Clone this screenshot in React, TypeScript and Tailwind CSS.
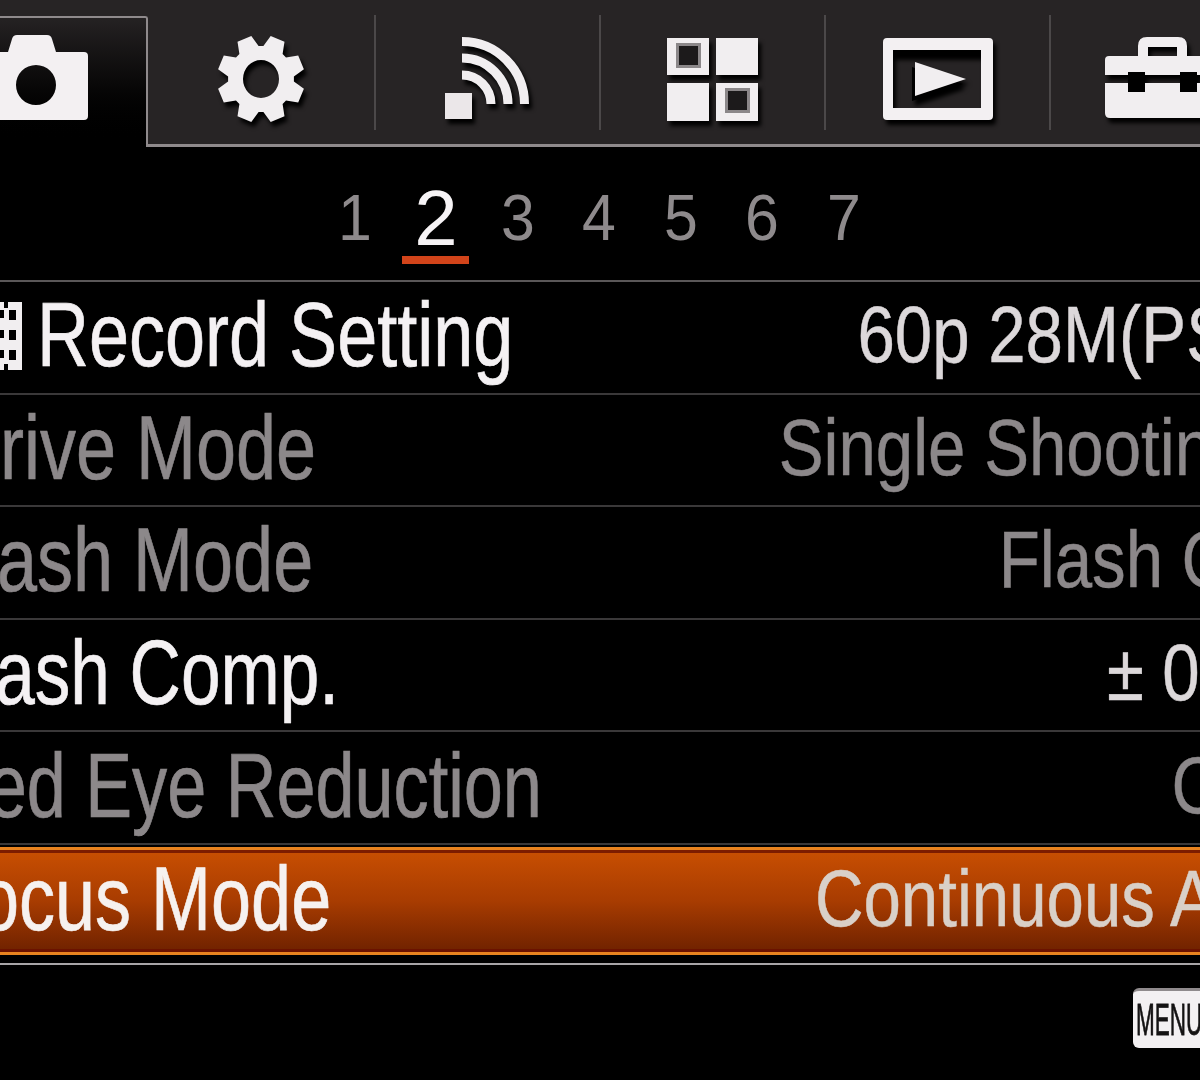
import React from 'react'

const shadow = 'drop-shadow-[3px_5px_2px_#000]'

function buildGear() {
  const parts: string[] = []
  for (let i = 0; i < 8; i++) {
    const a = ((i * 45 + 22.5) * Math.PI) / 180
    const pt = (r: number, off: number) =>
      `${(44 + r * Math.sin(a + off)).toFixed(1)} ${(44 - r * Math.cos(a + off)).toFixed(1)}`
    parts.push(`${i === 0 ? 'M' : 'L'}${pt(33, -0.32)}`, `L${pt(44, -0.17)}`, `L${pt(44, 0.17)}`, `L${pt(33, 0.32)}`)
  }
  return parts.join(' ') + ' Z M44 25 A18 19 0 1 0 44 63 A18 19 0 1 0 44 25 Z'
}

function CameraIcon() {
  return (
    <svg width="88" height="86" viewBox="0 0 88 86">
      <path
        fillRule="evenodd"
        fill="#f3f0f2"
        d="M0 17 L8 17 L12 4 Q13 0 17 0 L47 0 Q51 0 52 4 L56 17 L84 17 Q88 17 88 21 L88 81 Q88 85 84 85 L0 85 Z M36 30 A20 20 0 1 0 36 70 A20 20 0 1 0 36 30 Z"
      />
    </svg>
  )
}

function GearIcon() {
  return (
    <svg width="88" height="88" viewBox="0 0 88 88" className={shadow}>
      <path fillRule="evenodd" fill="#f1eef0" d={buildGear()} />
    </svg>
  )
}

function WifiIcon() {
  return (
    <svg width="86" height="84" viewBox="0 0 86 84" className={shadow}>
      <rect x="0" y="56" width="27" height="26" fill="#ebe7e9" />
      <g fill="none" stroke="#f1eef0" strokeWidth="9">
        <path d="M17 4.5 A62.5 62.5 0 0 1 79.5 67" />
        <path d="M17 21 A46 46 0 0 1 63 67" />
        <path d="M17 38 A29 29 0 0 1 46 67" />
      </g>
    </svg>
  )
}

function GridIcon() {
  return (
    <svg width="91" height="83" viewBox="0 0 91 83" className={shadow}>
      <g fill="#f1eef0">
        <path fillRule="evenodd" d="M0 0 H42 V37 H0 Z M9 5 V30 H34 V5 Z" />
        <rect x="49" y="0" width="42" height="37" />
        <rect x="0" y="45" width="42" height="38" />
        <path fillRule="evenodd" d="M49 45 H91 V83 H49 Z M58 50 V75 H83 V50 Z" />
      </g>
      <path fillRule="evenodd" fill="#8b8789" d="M9 5 H34 V30 H9 Z M12 8 V27 H31 V8 Z" />
      <path fillRule="evenodd" fill="#8b8789" d="M58 50 H83 V75 H58 Z M61 53 V72 H80 V53 Z" />
      <rect x="12" y="8" width="19" height="19" fill="#1c1a1b" />
      <rect x="61" y="53" width="19" height="19" fill="#1c1a1b" />
    </svg>
  )
}

function PlayIcon() {
  return (
    <svg width="110" height="82" viewBox="0 0 110 82" className={shadow}>
      <path
        fillRule="evenodd"
        fill="#f3f0f2"
        d="M4 0 H106 Q110 0 110 4 V78 Q110 82 106 82 H4 Q0 82 0 78 V4 Q0 0 4 0 Z M10 12 V70 H98 V12 Z"
      />
      <rect x="10" y="12" width="88" height="5" fill="#000" />
      <path d="M32 24 L83 41 L32 58 Z" fill="#000" transform="translate(-3 5)" />
      <path d="M32 24 L83 41 L32 58 Z" fill="#f1eef0" />
    </svg>
  )
}

function ToolboxIcon() {
  return (
    <svg width="114" height="84" viewBox="0 0 114 84" className={`${shadow} ml-[12px] shrink-0`}>
      <path
        fillRule="evenodd"
        fill="#f1eef0"
        d="M33 22 V10 Q33 1 42 1 L73 1 Q82 1 82 10 V22 Z M43 11 V20 H72 V11 Z"
      />
      <path fill="#f1eef0" d="M4 20 H114 V39 H0 V24 Q0 20 4 20 Z" />
      <path fill="#f1eef0" d="M0 47 H114 V82 H5 Q0 82 0 77 Z" />
      <path fill="#000" d="M23 36 H40 V56 H23 Z M75 36 H92 V56 H75 Z" />
    </svg>
  )
}

function FilmIcon() {
  return (
    <svg width="22" height="70" viewBox="0 0 22 70" className="mr-[15px] shrink-0">
      <path
        fillRule="evenodd"
        fill="#f1eef0"
        d="M0 2 H4 V8 H8 V2 H22 V70 H8 V64 H4 V70 H0 V58 H4 V50 H0 V38 H4 V30 H0 V18 H4 V10 H0 Z M9 10 V20 H16 V10 Z M9 30 V40 H16 V30 Z M9 50 V60 H16 V50 Z"
      />
    </svg>
  )
}

const pages = ['1', '2', '3', '4', '5', '6', '7']

const rows = [
  { label: 'Record Setting', value: '60p 28M(PS)', on: true, labelPos: 'ml-0', labelScale: 'scale-x-[0.8]', valuePos: 'mr-[-53px]', film: true },
  { label: 'Drive Mode', value: 'Single Shooting', on: false, labelPos: 'ml-[-52px]', labelScale: 'scale-x-[0.8]', valuePos: 'mr-[-49px]', film: false },
  { label: 'Flash Mode', value: 'Flash Off', on: false, labelPos: 'ml-[-63px]', labelScale: 'scale-x-[0.8]', valuePos: 'mr-[-70px]', film: false },
  { label: 'Flash Comp.', value: '±0.0', on: true, labelPos: 'ml-[-64px]', labelScale: 'scale-x-[0.79]', valuePos: 'mr-[-111px] tracking-[22px]', film: false },
  { label: 'Red Eye Reduction', value: 'Off', on: false, labelPos: 'ml-[-63px]', labelScale: 'scale-x-[0.78]', valuePos: 'mr-[-60px]', film: false },
]

export default function App() {
  return (
    <div className="flex h-[1080px] w-[1200px] flex-col overflow-hidden bg-black font-['Liberation_Sans',Arial,sans-serif]">
      {/* Tabs */}
      <div className="flex h-[147px] shrink-0 bg-[#272425]">
        <div className="flex h-[131px] w-[148px] shrink-0 self-end rounded-tr-[3px] border-t-2 border-r-2 border-[#8f8a8c] bg-gradient-to-b from-[#252223] via-[#0a0909] to-black">
          <div className="flex h-full w-[88px] items-start pt-[17px]">
            <CameraIcon />
          </div>
        </div>
        <div className="flex min-w-0 flex-1 border-b-[3px] border-[#8f8a8c]">
          <div className="flex w-[226px] shrink-0 items-center justify-center pt-[14px]">
            <GearIcon />
          </div>
          <div className="mt-[15px] h-[115px] w-[2px] shrink-0 bg-[#4b4849]" />
          <div className="flex w-[223px] shrink-0 items-center justify-center pt-[14px]">
            <WifiIcon />
          </div>
          <div className="mt-[15px] h-[115px] w-[2px] shrink-0 bg-[#4b4849]" />
          <div className="flex w-[223px] shrink-0 items-center justify-center pt-[14px]">
            <GridIcon />
          </div>
          <div className="mt-[15px] h-[115px] w-[2px] shrink-0 bg-[#4b4849]" />
          <div className="flex w-[223px] shrink-0 items-center justify-center pt-[14px]">
            <PlayIcon />
          </div>
          <div className="mt-[15px] h-[115px] w-[2px] shrink-0 bg-[#4b4849]" />
          <div className="flex min-w-0 flex-1 items-center overflow-hidden pt-[12px] pl-[42px]">
            <ToolboxIcon />
          </div>
        </div>
      </div>

      {/* Page numbers */}
      <div className="flex h-[135px] shrink-0 items-start justify-center border-b-2 border-[#5a5758] pr-[2px]">
        {pages.map((p) => (
          <div key={p} className="relative flex h-[117px] w-[81.5px] items-center justify-center pt-[24px]">
            {p === '2' ? (
              <>
                <span className="text-[78px] leading-none text-[#f6f3f5]">{p}</span>
                <span className="absolute bottom-0 left-[7px] h-[8px] w-[67px] bg-[#d2441a]" />
              </>
            ) : (
              <span className="scale-x-[0.95] text-[64px] leading-none text-[#8e8a8c]">{p}</span>
            )}
          </div>
        ))}
      </div>

      {/* Menu rows */}
      {rows.map((row) => (
        <div
          key={row.label}
          className="flex h-[112.6px] shrink-0 items-center justify-between border-b-2 border-[#3a3839] pb-[4px] whitespace-nowrap"
        >
          <div className={`flex items-center ${row.labelPos}`}>
            {row.film && <FilmIcon />}
            <span
              className={`origin-left text-[90px] leading-none [-webkit-text-stroke:0.7px] ${row.labelScale} ${row.on ? 'text-[#f4f1f3]' : 'text-[#8c888a]'}`}
            >
              {row.label}
            </span>
          </div>
          <span
            className={`origin-right scale-x-[0.84] text-[80px] leading-none [-webkit-text-stroke:0.5px] ${row.valuePos} ${row.on ? 'text-[#dcd8da]' : 'text-[#8c888a]'}`}
          >
            {row.value}
          </span>
        </div>
      ))}

      {/* Focused row */}
      <div className="mt-[2px] flex h-[108px] shrink-0 items-center justify-between border-y-[3px] border-[#e8831f] bg-gradient-to-b from-[#c94f02] via-[#a83c01] to-[#6f2200] pb-[4px] whitespace-nowrap shadow-[inset_0_3px_0_#7d1c00,inset_0_-3px_0_#6b1200]">
        <span className="ml-[-65px] origin-left scale-x-[0.8] text-[90px] leading-none text-[#f6f1ef] [-webkit-text-stroke:0.7px]">
          Focus Mode
        </span>
        <span className="mr-[-56px] origin-right scale-x-[0.84] text-[80px] leading-none text-[#d9d0c8] [-webkit-text-stroke:0.5px]">
          Continuous AF
        </span>
      </div>

      <div className="mt-[8px] h-[2px] shrink-0 bg-[#a8a5a7]" />

      {/* Footer */}
      <div className="flex flex-1 items-start justify-end pt-[23px]">
        <div className="flex h-[60px] w-[67px] items-center overflow-hidden rounded-l-[6px] border-t-[3px] border-[#8f8a8c] bg-[#f3f0f2] pl-[3px]">
          <span className="origin-left scale-x-50 text-[45px] leading-none text-[#141213] [-webkit-text-stroke:0.8px]">MENU</span>
        </div>
      </div>
    </div>
  )
}
